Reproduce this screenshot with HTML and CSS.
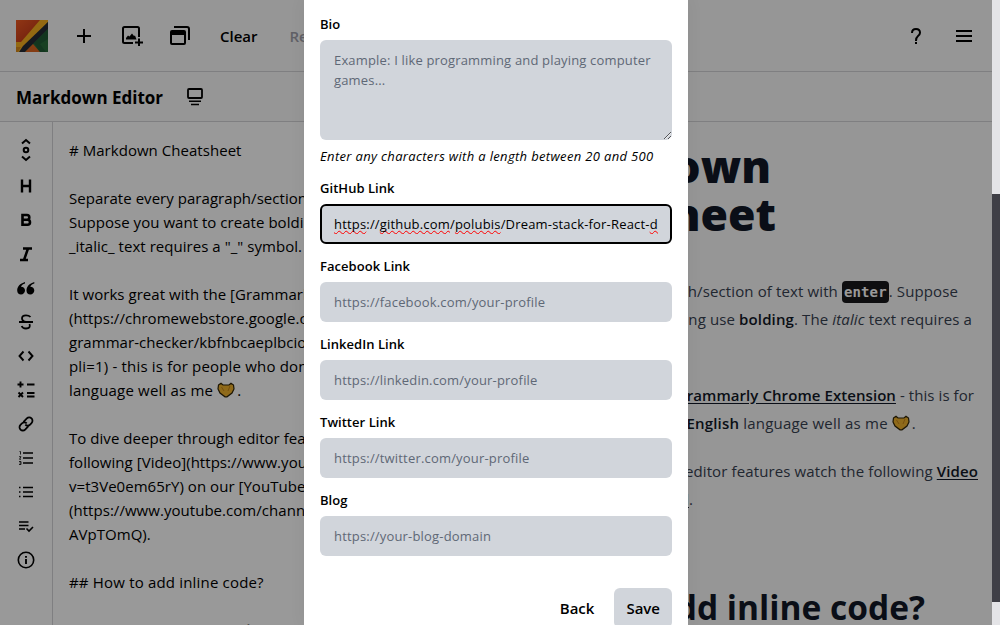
FILE: index.html
```html
<!DOCTYPE html>
<html lang="en">
<head>
<meta charset="utf-8">
<title>Markdown Editor</title>
<link rel="stylesheet" href="styles.css">
</head>
<body>
<div class="screen">
  <div class="app">
    <header class="topbar">
      <svg class="logo" viewBox="0 0 32 32"><defs><linearGradient id="r" x2="1" y2="1"><stop stop-color="#f05a22"/><stop offset="1" stop-color="#b02c16"/></linearGradient></defs><rect width="32" height="32" fill="#286b3a"/><path d="M0 0H27L5 23H0Z" fill="url(#r)"/><path d="M0 22H5L24 0H32V2L5 32H0Z" fill="#f7b01e"/><path d="M0 27H5L2 32H0Z" fill="#d98a1c"/><path d="M32 2V9L9 32H3L7 26Z" fill="#262a35"/><path d="M17 24 24 32H9Z" fill="#dd6420"/><path d="M18 23 32 9V19L24 24 30 32H24Z" fill="#205a35"/></svg>
      <svg class="ic plus" viewBox="0 0 24 24"><path d="M12 5v14M5 12h14" fill="none" stroke="#000" stroke-width="2"/></svg>
      <svg class="ic image" viewBox="0 0 24 24"><path d="M19 13V4.500Q19 3 17.500 3H4.500Q3 3 3 4.500V17.500Q3 19 4.500 19H13M19 14.500V22M15 18.500H23" fill="none" stroke="#000" stroke-width="2"/><path d="M6 15.500V14L8 11.500 9.500 12.500 12 9.500 14 12 15 11.500 16.500 15.500Z"/></svg>
      <svg class="ic windows" viewBox="0 0 24 24"><path d="M6 3H19Q21 3 21 5V16" fill="none" stroke="#000" stroke-width="2"/><rect x="3" y="7" width="14" height="13" rx="1" fill="none" stroke="#000" stroke-width="2"/><path d="M3 7H17V11H3Z"/></svg>
      <span class="clear">Clear</span><span class="reset">Reset</span>
      <div class="right-tools">
        <svg class="ic" viewBox="0 0 24 24"><path d="M8 9Q8 5 12 5T16 8.800Q16 10.500 14 12 12 13.500 12 17M12 18V20" fill="none" stroke="#000" stroke-width="2"/></svg>
        <svg class="ic" viewBox="0 0 24 24"><path d="M4 7H20M4 12H20M4 17H20" stroke="#000" stroke-width="2"/></svg>
      </div>
    </header>
    <div class="titlebar"><h2>Markdown Editor</h2><svg class="ic" viewBox="0 0 24 24"><g fill="none" stroke="#000"><rect x="5" y="4" width="14" height="9" rx="1" stroke-width="1.800"/><path d="M6 16.200H18M8 19.500H16" stroke-width="1.500"/></g></svg></div>
    <main class="workspace">
      <aside class="tools">
        <svg viewBox="0 0 24 24"><g fill="none" stroke="#000" stroke-width="2"><path d="M8 5.500 12 2 16 5.500M8 18.500 12 22 16 18.500"/><circle cx="12" cy="12" r="2.300"/></g></svg>
        <svg viewBox="0 0 24 24"><path d="M8 5.500V18.500M16 5.500V18.500M8 12H16" stroke="#000" stroke-width="2.400"/></svg>
        <svg viewBox="0 0 24 24"><path d="M8.500 7H13Q15.300 7 15.300 9.400T13 11.800H8.500ZM8.500 11.800H13.500Q16 11.800 16 14.300T13.500 16.800H8.500Z" fill="none" stroke="#000" stroke-width="2.600"/></svg>
        <svg viewBox="0 0 24 24"><path d="M9 6.500H18M6 18H14M14 6.500 10 18" fill="none" stroke="#000" stroke-width="2.500"/></svg>
        <svg viewBox="0 0 24 24"><path id="q" d="M11 6C6 7.500 3.200 10.500 3.200 14.500 3.200 17 4.800 18.500 7 18.500S11 16.700 11 14.500 9.300 10.800 7 10.800C7.400 9.300 9 8.300 11 7.600Z"/><use href="#q" x="9.300"/></svg>
        <svg viewBox="0 0 24 24"><path d="M16.500 7Q15 5.300 12 5.300 8 5.300 8 8.300T12 12M5 12H19M15.500 14Q17 18.500 12 18.500 8.500 18.500 7.700 16" fill="none" stroke="#000" stroke-width="1.800"/></svg>
        <svg viewBox="0 0 24 24"><path d="M9.500 7.500 5.500 12 9.500 16.500M14.500 7.500 18.500 12 14.500 16.500" fill="none" stroke="#000" stroke-width="1.900"/></svg>
        <svg viewBox="0 0 24 24"><path d="M3.500 6.500H9.500M6.500 3.500V9.500M13 6.500H20.500M4.500 14.500 9 19M9 14.500 4.500 19M13 15H20.500M13 18.500H20.500" stroke="#000" stroke-width="1.900"/></svg>
        <svg viewBox="0 0 24 24"><g transform="rotate(-45 12 12)" fill="none" stroke="#000" stroke-width="1.800"><path d="M12.500 15.300H7.500A3.300 3.300 0 0 1 7.500 8.700H9.500A3.300 3.300 0 0 1 13 12M11.500 8.700H16.500A3.300 3.300 0 0 1 16.500 15.300H14.500A3.300 3.300 0 0 1 11 12"/></g></svg>
        <svg viewBox="0 0 24 24"><path d="M9 7H19M9 12H19M9 17H19" stroke="#000" stroke-width="1.600"/><path d="M5.500 5.500H6.500V8.500M5 10.700H7L5.500 13.300H7M5 15.500H7V18.500H5M5.500 17H7" fill="none" stroke="#000" stroke-width=".8"/></svg>
        <svg viewBox="0 0 24 24"><path d="M9 7.500H19M9 12H19M9 16.500H19M5 7.500H6.500M5 12H6.500M5 16.500H6.500" stroke="#000" stroke-width="1.600"/></svg>
        <svg viewBox="0 0 24 24"><path d="M5 8H14.500M5 11.500H14.500M5 15H11M12.500 14.500 15 17 19 13" fill="none" stroke="#000" stroke-width="1.600"/></svg>
        <svg viewBox="0 0 24 24"><circle cx="12" cy="12" r="7.700" fill="none" stroke="#000" stroke-width="1.600"/><path d="M12 8V9.700M12 11V16" stroke="#000" stroke-width="1.900"/></svg>
      </aside>
      <div class="source">
        <div># Markdown Cheatsheet</div><br>
        <div>Separate every paragraph/section of text</div>
        <div>Suppose you want to create bolding, use</div>
        <div>_italic_ text requires a "_" symbol.</div><br>
        <div>It works great with the [Grammarly Chrome]</div>
        <div>(https://chromewebstore.google.com/detail</div>
        <div>grammar-checker/kbfnbcaeplbcioakkpcpgfkobk</div>
        <div class="wide">pli=1) - this is for people who don't know</div>
        <div class="wide">language well as me <svg class="heart" viewBox="0 0 18 16"><path d="M1.500 3 4 1.300 6 3H12L14 1.300 16.500 3 17 7 15 11 10 14.800H8L3 11 1 7Z" fill="#efb12c" stroke="#302406" stroke-width="1.200"/><path d="M4.500 5 7 9M13 4 11 9" stroke="#c6851b"/></svg>.</div><br>
        <div>To dive deeper through editor features</div>
        <div>following [Video](https://www.youtube.com</div>
        <div>v=t3Ve0em65rY) on our [YouTube Channel]</div>
        <div>(https://www.youtube.com/channel/UC</div>
        <div>AVpTOmQ).</div><br>
        <div class="wide">## How to add inline code?</div><br>
        <div class="wide">To add inline code press ` key)</div>
      </div>
      <article class="preview">
        <h1><span class="e-own">Markdown</span><span class="e-heet">Cheatsheet</span></h1>
        <p class="first"><span class="e-suppose">paragraph/section of text with <code>enter</code>. Suppose</span><span class="e-requires">bolding use <b>bolding</b>. The <i>italic</i> text requires a</span></p>
        <p class="second"><span class="e-for"><b class="link">Grammarly Chrome Extension</b> - this is for</span><span class="e-me"><b>English</b> language well as me <svg class="heart" viewBox="0 0 18 16"><path d="M1.500 3 4 1.300 6 3H12L14 1.300 16.500 3 17 7 15 11 10 14.800H8L3 11 1 7Z" fill="#efb12c" stroke="#302406" stroke-width="1.200"/><path d="M4.500 5 7 9M13 4 11 9" stroke="#c6851b"/></svg>.</span></p>
        <p class="third"><span class="e-video">editor features watch the following <b class="link">Video</b></span><span class="e-channel"><b class="link">Channel</b>.</span></p>
        <h3><span class="e-code">How to add inline code?</span></h3>
      </article>
    </main>
  </div>
  <div class="backdrop">
    <form class="modal">
      <div class="field"><label>Bio</label><textarea placeholder="Example: I like programming and playing computer games..."></textarea><em>Enter any characters with a length between 20 and 500</em></div>
      <div class="field"><label>GitHub Link</label><div class="input focused"><div class="value"><u>https</u>://<u>github.com</u>/<u>polubis</u>/Dream-stack-for-React-<u>developers</u></div></div></div>
      <div class="field"><label>Facebook Link</label><input class="input" placeholder="https://facebook.com/your-profile"></div>
      <div class="field"><label>LinkedIn Link</label><input class="input" placeholder="https://linkedin.com/your-profile"></div>
      <div class="field"><label>Twitter Link</label><input class="input" placeholder="https://twitter.com/your-profile"></div>
      <div class="field"><label>Blog</label><input class="input" placeholder="https://your-blog-domain"></div>
      <div class="actions"><button type="button">Back</button><button type="button" class="save">Save</button></div>
    </form>
  </div>
  <div class="scrollbar"><div class="thumb"></div></div>
</div>
</body>
</html>
```
FILE: styles.css
```css
*{box-sizing:border-box}
body{margin:0;font-family:"Open Sans","Noto Sans",sans-serif;color:#000;background:#fff;overflow:hidden}
.screen{position:relative;width:1000px;height:625px;overflow:hidden}
.app{width:992px;height:625px;background:#fafafa;display:flex;flex-direction:column;overflow:hidden}
.topbar{height:72px;flex:none;border-bottom:1px solid #d4d4d8;display:flex;align-items:center;padding:0 16px}
.logo{width:32px;height:32px;flex:none}
.ic{width:24px;height:24px;flex:none}
.plus{margin-left:24px}
.image,.windows{margin-left:24px}
.clear,.reset{font-size:15px;font-weight:600;margin-left:28px}
.reset{margin-left:32px;color:#a1a1aa}
.right-tools{margin-left:auto;display:flex;gap:24px}
.titlebar{height:50px;flex:none;border-bottom:1px solid #d4d4d8;display:flex;align-items:center;padding:0 16px;gap:20px}
.titlebar h2{margin:0;padding-top:2px;font-size:17px;font-weight:700;line-height:28px}
.workspace{display:flex;height:503px;flex:none}
.tools{width:53px;flex:none;border-right:1px solid #d4d4d8;background:#fff;display:flex;flex-direction:column;align-items:center;gap:10px;padding-top:16px}
.tools svg{width:24px;height:24px;flex:none}
.tools svg:first-child{margin-bottom:2px}
.source{width:417px;flex:none;padding:16px 0 0 16px;background:#fff;font-size:15px;line-height:24px;letter-spacing:.04px;white-space:nowrap;overflow:hidden}
.source .wide{letter-spacing:.18px}
.heart{width:18px;height:16px;vertical-align:-2px;margin-right:2px}
.preview{flex:1;min-width:0;display:flex;flex-direction:column;font-size:15px;line-height:28px;color:#374151;white-space:nowrap;overflow:hidden}
.preview span{display:flow-root;text-align:right}
.preview h1{margin:20px 0 0;font-size:44.500px;line-height:48px;font-weight:800;color:#111827}
.preview p{margin:0;letter-spacing:.12px}
.preview b{font-weight:600;color:#111827}
.preview .first{margin-top:39px}
.preview .second{margin-top:48px}
.preview .third{margin-top:20px}
.preview h3{margin:74px 0 0;font-size:33.500px;line-height:40px;font-weight:700;color:#111827}
.preview .link{text-decoration:underline;text-underline-offset:2px}
.preview code{font:700 14px/22px "DejaVu Sans Mono",monospace;background:#18181b;color:#fff;border-radius:4px;padding:3px 2px}
.e-own{padding-right:221px}.e-heet{padding-right:216px}
.e-suppose{padding-right:34px}.e-requires{padding-right:20px}
.e-for{padding-right:18px;letter-spacing:.07px}.e-me{padding-right:76px;letter-spacing:.2px}
.e-video{padding-right:14px}.e-channel{padding-right:299px}
.e-code{padding-right:67px}
.backdrop{position:absolute;top:0;left:0;width:992px;height:625px;background:rgba(0,0,0,.4);display:flex;justify-content:center}
.modal{width:384px;height:625px;background:#fff;padding:14px 16px 0;display:flex;flex-direction:column;gap:12px;box-shadow:0 0 16px rgba(0,0,0,.06)}
.field{display:flex;flex-direction:column;align-items:stretch;gap:6px}
.field label{font-size:13px;line-height:20px;font-weight:600;letter-spacing:.04px}
.field em{font-size:13px;line-height:20px;letter-spacing:.34px}
.field textarea{height:100px;border:0;border-radius:6px;background:#d1d5db;padding:10px 14px;font:13px/20px "Open Sans",sans-serif;letter-spacing:.17px;display:block;resize:vertical}
.input{height:40px;border:0;border-radius:6px;background:#d1d5db;padding:0 14px;font:13px/20px "Open Sans",sans-serif;letter-spacing:.18px;width:100%}
::placeholder{color:#5f6876;opacity:1}
.focused{border:2px solid #000;padding:8px 12px}
.value{overflow:hidden;white-space:nowrap}
.value u{text-decoration:underline wavy #f00 1px;text-underline-offset:1px;text-decoration-skip-ink:none}
.actions{display:flex;justify-content:flex-end;gap:8px;margin-top:20px}
.actions button{height:40px;padding:0 12px;border:0;border-radius:6px;background:none;font:600 15px "Open Sans",sans-serif;color:#000}
.actions .save{background:#d1d5db}
.scrollbar{position:absolute;right:0;top:0;width:8px;height:625px;background:#e4e4e7;padding-top:194px}
.thumb{height:408px;background:#3f3f46}
```
